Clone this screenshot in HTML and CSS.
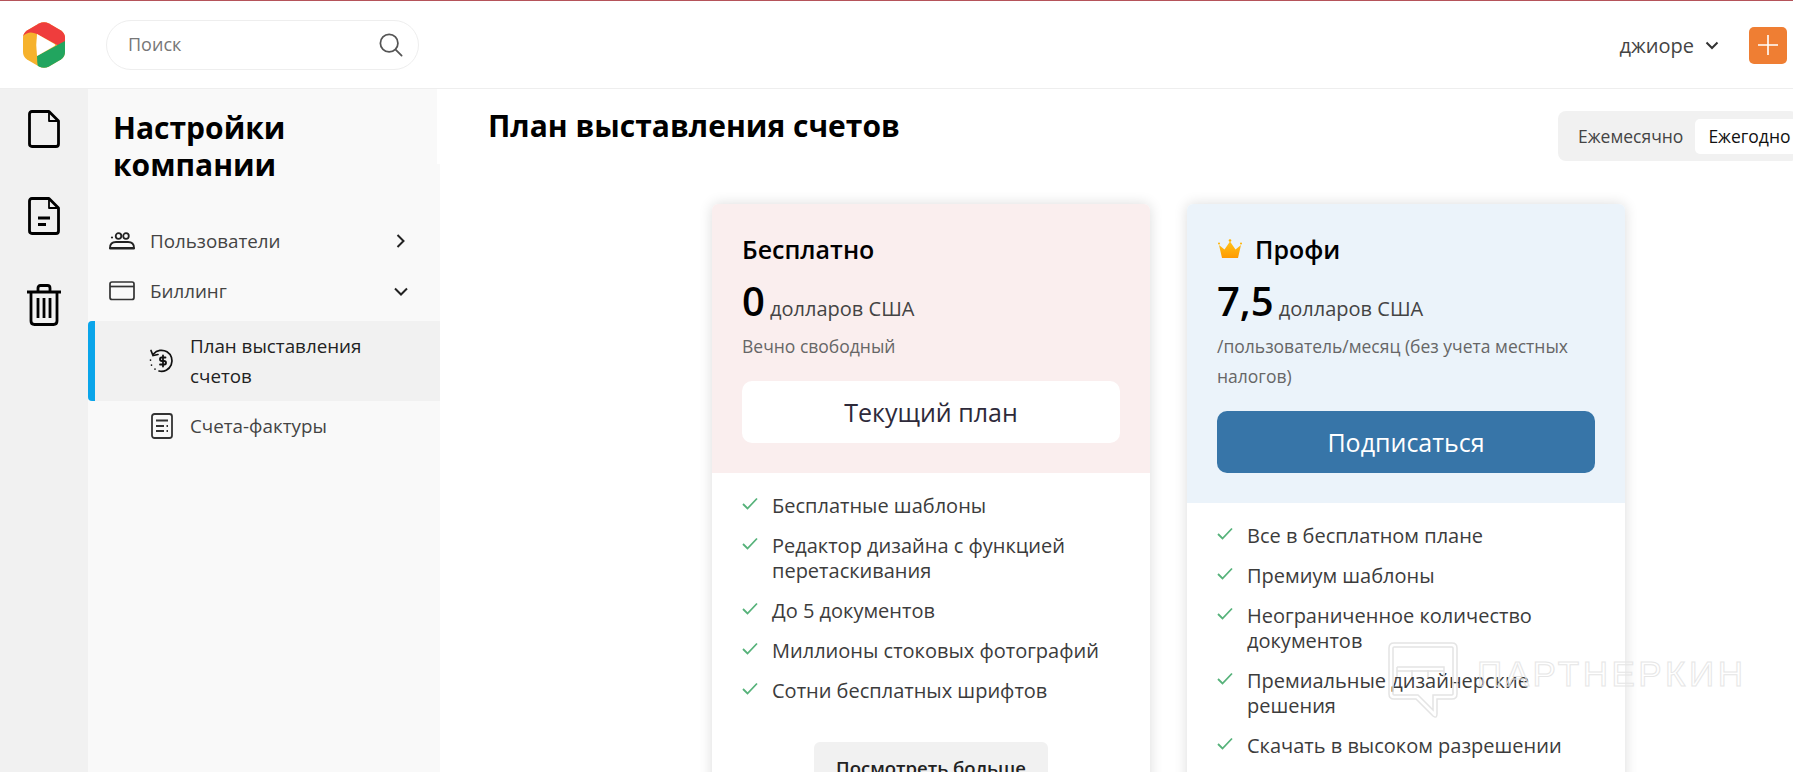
FILE: index.html
```html
<!DOCTYPE html>
<html lang="ru">
<head>
    <meta charset="UTF-8">
    <meta name="viewport" content="width=device-width, initial-scale=1.0">
    <title>План выставления счетов</title>
    <link rel="stylesheet" href="styles.css">
</head>
<body>
    <header class="topbar">
        <svg class="logo" width="42" height="46" viewBox="0 0 42 46">
            <defs>
                <clipPath id="logoHex">
                    <path d="M16 1.500 Q21 -1 26 1.500 L38 8.500 Q42 11 42 16 V30 Q42 35 38 37.500 L26 44.500 Q21 47 16 44.500 L4 37.500 Q0 35 0 30 V16 Q0 11 4 8.500 Z"/>
                </clipPath>
            </defs>
            <g clip-path="url(#logoHex)">
                <rect width="42" height="46" fill="#f6b22c"/>
                <path d="M0 14 Q6 8 14 12 L36 24 L42 20 V0 H0 Z" fill="#ef3d3d"/>
                <path d="M14 34 L42 19 V46 H15 Q14 40 14 34 Z" fill="#22a55f"/>
                <path d="M14 12 L31.500 22 Q33 23 31.500 24 L14 34 Q12.500 23 14 12 Z" fill="#fff"/>
            </g>
        </svg>
        <div class="search">
            <span class="search_text">Поиск</span>
            <svg width="24" height="24" viewBox="0 0 26 26" fill="none" stroke="#555" stroke-width="1.900" stroke-linecap="round">
                <circle cx="11" cy="11" r="9.500"/>
                <path d="M18 18 L24.500 24.500"/>
            </svg>
        </div>
        <div class="user">
            <span>джиоре</span>
            <svg width="14" height="9" viewBox="0 0 14 9" fill="none" stroke="#333" stroke-width="2"><path d="M1.500 1.500 L7 7 L12.500 1.500"/></svg>
        </div>
        <div class="add_btn">
            <svg width="20" height="20" viewBox="0 0 20 20" stroke="#fff" stroke-width="1.600"><path d="M10 0 V20 M0 10 H20"/></svg>
        </div>
    </header>

    <div class="layout">
        <nav class="rail">
            <svg width="32" height="38" viewBox="0 0 32 38" fill="none" stroke="#000" stroke-width="2.800" stroke-linejoin="round">
                <path d="M4 1.500 H21 L30.500 11 V34 Q30.500 36.500 28 36.500 H4 Q1.500 36.500 1.500 34 V4 Q1.500 1.500 4 1.500 Z"/>
                <path d="M21 1.500 V11 H30.500" stroke-width="1.800"/>
            </svg>
            <svg width="32" height="38" viewBox="0 0 32 38" fill="none" stroke="#000" stroke-width="2.800" stroke-linejoin="round">
                <path d="M4 1.500 H21 L30.500 11 V34 Q30.500 36.500 28 36.500 H4 Q1.500 36.500 1.500 34 V4 Q1.500 1.500 4 1.500 Z"/>
                <path d="M21 1.500 V11 H30.500" stroke-width="1.800"/>
                <path d="M10 21 H22 M10 27.500 H18"/>
            </svg>
            <svg width="36" height="42" viewBox="0 0 36 42" fill="none" stroke="#000" stroke-width="2.800" stroke-linejoin="round">
                <path d="M1 8 H35"/>
                <path d="M12 7 V4 Q12 1.500 14.500 1.500 H21.500 Q24 1.500 24 4 V7"/>
                <path d="M5 8 V37 Q5 40.500 8.500 40.500 H27.500 Q31 40.500 31 37 V8"/>
                <path d="M12 14 V34 M18 14 V34 M24 14 V34"/>
            </svg>
        </nav>

        <aside class="sidebar">
            <div class="side_head">
                <h2 class="side_title">Настройки компании</h2>
            </div>
            <div class="side_nav">
                <div class="menu_item">
                    <svg width="26" height="18" viewBox="0 0 26 18" fill="#222">
                        <circle cx="9.500" cy="4" r="2.800" fill="none" stroke="#222" stroke-width="1.800"/>
                        <circle cx="17" cy="4" r="2.800" fill="none" stroke="#222" stroke-width="1.800"/>
                        <circle cx="3" cy="5.500" r="1.100"/>
                        <path d="M1 16 Q1 10 7 10 H19 Q25 10 25 16 Z" fill="none" stroke="#222" stroke-width="1.800"/>
                        <path d="M0.500 15 H25.500 V17.500 H0.500 Z"/>
                    </svg>
                    <span class="menu_label">Пользователи</span>
                    <svg class="menu_arrow arrow_side" width="9" height="14" viewBox="0 0 9 14" fill="none" stroke="#222" stroke-width="2"><path d="M1.500 1 L7.500 7 L1.500 13"/></svg>
                </div>
                <div class="menu_item">
                    <svg width="26" height="20" viewBox="0 0 26 20" fill="none" stroke="#333" stroke-width="1.700">
                        <rect x="1" y="1" width="24" height="17.500" rx="2"/>
                        <path d="M1 5.500 H25"/>
                    </svg>
                    <span class="menu_label">Биллинг</span>
                    <svg class="menu_arrow" width="14" height="9" viewBox="0 0 14 9" fill="none" stroke="#222" stroke-width="2"><path d="M1 1.500 L7 7.500 L13 1.500"/></svg>
                </div>
                <div class="sub_item sub_active">
                    <svg width="26" height="26" viewBox="0 0 26 26" fill="none" stroke="#111" stroke-width="1.700" stroke-linecap="round">
                        <path d="M4.500 6 A10.500 10.500 0 1 1 10 23"/>
                        <path d="M2 2.500 L4 7.500 L9 6.500"/>
                        <path d="M1.500 12 V12.100 M2.500 17 V17.100 M6 21 V21.100"/>
                        <path d="M16.500 9.500 H12.500 Q11 9.500 11 11.300 Q11 13 13 13 H15 Q17 13 17 14.800 Q17 16.500 15.500 16.500 H11 M14 7.500 V18.500" stroke-width="1.800"/>
                    </svg>
                    <span>План выставления счетов</span>
                </div>
                <div class="sub_item sub_plain">
                    <svg width="22" height="26" viewBox="0 0 22 26" fill="none" stroke="#333" stroke-width="1.800">
                        <rect x="1" y="1" width="20" height="24" rx="2.500"/>
                        <path d="M5 7.500 H17 M5 13 H13 M15.500 13 H17 M5 18 H13 M15.500 18 H17"/>
                    </svg>
                    <span class="sub_muted">Счета-фактуры</span>
                </div>
            </div>
        </aside>

        <main class="content">
            <div class="content_head">
                <h1 class="page_title">План выставления счетов</h1>
                <div class="period">
                    <span class="period_opt">Ежемесячно</span>
                    <span class="period_opt period_on">Ежегодно</span>
                </div>
            </div>

            <div class="plans">
                <section class="plan">
                    <div class="plan_top plan_free">
                        <div class="plan_name">Бесплатно</div>
                        <div class="plan_price"><b>0</b> долларов США</div>
                        <p class="plan_note">Вечно свободный</p>
                        <div class="plan_btn btn_current">Текущий план</div>
                    </div>
                    <ul class="features">
                        <li><svg class="check" viewBox="0 0 16 13"><path d="M1 7 L5.500 11.500 L15 1.500"/></svg>Бесплатные шаблоны</li>
                        <li><svg class="check" viewBox="0 0 16 13"><path d="M1 7 L5.500 11.500 L15 1.500"/></svg>Редактор дизайна с функцией перетаскивания</li>
                        <li><svg class="check" viewBox="0 0 16 13"><path d="M1 7 L5.500 11.500 L15 1.500"/></svg>До 5 документов</li>
                        <li><svg class="check" viewBox="0 0 16 13"><path d="M1 7 L5.500 11.500 L15 1.500"/></svg>Миллионы стоковых фотографий</li>
                        <li><svg class="check" viewBox="0 0 16 13"><path d="M1 7 L5.500 11.500 L15 1.500"/></svg>Сотни бесплатных шрифтов</li>
                    </ul>
                    <div class="more_wrap"><span class="more_btn">Посмотреть больше</span></div>
                </section>

                <section class="plan">
                    <div class="plan_top plan_pro">
                        <div class="plan_name">
                            <svg class="crown" width="24" height="20" viewBox="0 0 24 20">
                                <defs>
                                    <linearGradient id="crownFill" x1="0" y1="0" x2="0" y2="1">
                                        <stop offset="0" stop-color="#ffc21a"/>
                                        <stop offset="1" stop-color="#ff9a00"/>
                                    </linearGradient>
                                </defs>
                                <path d="M1 6 L6.500 10.500 L12 2.500 L17.500 10.500 L23 6 L20 19 H4 Z" fill="url(#crownFill)"/>
                                <circle cx="12" cy="1.500" r="1.300" fill="#ffb300"/>
                                <circle cx="1" cy="4.500" r="1" fill="#ffb300"/>
                                <circle cx="23" cy="4.500" r="1" fill="#ffb300"/>
                            </svg>
                            Профи
                        </div>
                        <div class="plan_price"><b>7,5</b> долларов США</div>
                        <p class="plan_note">/пользователь/месяц (без учета местных налогов)</p>
                        <div class="plan_btn btn_subscribe">Подписаться</div>
                    </div>
                    <ul class="features">
                        <li><svg class="check" viewBox="0 0 16 13"><path d="M1 7 L5.500 11.500 L15 1.500"/></svg>Все в бесплатном плане</li>
                        <li><svg class="check" viewBox="0 0 16 13"><path d="M1 7 L5.500 11.500 L15 1.500"/></svg>Премиум шаблоны</li>
                        <li><svg class="check" viewBox="0 0 16 13"><path d="M1 7 L5.500 11.500 L15 1.500"/></svg>Неограниченное количество документов</li>
                        <li><svg class="check" viewBox="0 0 16 13"><path d="M1 7 L5.500 11.500 L15 1.500"/></svg>Премиальные дизайнерские решения</li>
                        <li><svg class="check" viewBox="0 0 16 13"><path d="M1 7 L5.500 11.500 L15 1.500"/></svg>Скачать в высоком разрешении</li>
                    </ul>
                </section>
            </div>
        </main>
    </div>

    <!-- водяной знак поверх страницы -->
    <div class="watermark">
        <svg width="70" height="77" viewBox="0 0 70 77" fill="none" stroke="#e4e4e4" stroke-width="1.500">
            <path d="M6 1 H64 Q69 1 69 6 V52 Q69 57 64 57 H49 V72 Q49 77 45 74 L28 57 H6 Q1 57 1 52 V6 Q1 1 6 1 Z"/>
            <path d="M6 5 H64 Q65 5 65 6 V52 Q65 53 64 53 H45 V68 L30 53 H6 Q5 53 5 52 V6 Q5 5 6 5 Z"/>
            <path d="M9 25 H56 V35 M9 25 V35 M24 28 V35 M40 28 V35 M9 29 H56"/>
        </svg>
        <span class="watermark_text">ПАРТНЕРКИН</span>
    </div>
</body>
</html>
```

FILE: styles.css
```css
* {
    box-sizing: border-box;
}
html, body {
    height: 100%;
}
body {
    margin: 0;
    display: flex;
    flex-direction: column;
    overflow: hidden;
    font-family: "Open Sans", "Noto Sans", sans-serif;
    color: #333;
    background: #fff;
}

/* Topbar */
.topbar {
    flex: none;
    display: flex;
    align-items: center;
    height: 89px;
    padding: 1px 6px 0 23px;
    border-top: 1px solid #b5545a;
    border-bottom: 1px solid #eee;
}
.logo {
    flex: none;
}
.search {
    display: flex;
    align-items: center;
    justify-content: space-between;
    width: 313px;
    height: 50px;
    margin-left: 41px;
    padding: 0 15px 0 21px;
    border: 1px solid #eee;
    border-radius: 25px;
}
.search_text {
    padding-bottom: 2px;
    font-size: 18px;
    color: #777;
}
.user {
    display: flex;
    align-items: center;
    gap: 11px;
    margin-left: auto;
    font-size: 20px;
    color: #444;
}
.add_btn {
    display: flex;
    align-items: center;
    justify-content: center;
    width: 38px;
    height: 37px;
    margin-left: 30px;
    border-radius: 5px;
    background: #ef7e33;
}

/* Layout */
.layout {
    flex: 1;
    display: flex;
    min-height: 0;
}
.rail {
    flex: none;
    display: flex;
    flex-direction: column;
    align-items: center;
    width: 88px;
    padding-top: 21px;
    background: #f1f1f1;
}
.rail svg:nth-child(2) {
    margin-top: 49px;
}
.rail svg:nth-child(3) {
    margin-top: 49px;
}

/* Sidebar */
.sidebar {
    flex: none;
    display: flex;
    flex-direction: column;
    width: 352px;
}
.side_head {
    flex: none;
    height: 75px;
    margin-right: 3px;
    padding: 20px 25px 0;
    background: #f9f9f9;
}
.side_title {
    position: relative;
    margin: 0;
    font-size: 30px;
    line-height: 37px;
    font-weight: 700;
    color: #000;
}
.side_nav {
    flex: 1;
    padding-top: 52px;
    background: #f9f9f9;
}
.menu_item {
    display: flex;
    align-items: center;
    height: 50px;
    padding: 0 32px 0 21px;
    gap: 15px;
    font-size: 18.800px;
    color: #444;
}
.menu_arrow {
    margin-left: auto;
}
.arrow_side {
    margin-right: 3px;
}
.sub_item {
    display: flex;
    align-items: center;
    min-height: 50px;
    font-size: 18.800px;
    line-height: 30px;
    color: #222;
}
.sub_item svg {
    flex: none;
}
.sub_active {
    width: 100%;
    margin-top: 5px;
    padding: 10px 60px 10px 54px;
    gap: 15px;
    border-left: 7px solid #0aa5ea;
    border-radius: 4px 0 0 4px;
    background: #f1f1f1;
}
.sub_plain {
    padding-left: 63px;
    gap: 17px;
}
.sub_muted {
    color: #444;
}

/* Content */
.content {
    flex: 1;
    min-width: 0;
    overflow: hidden;
    padding: 0 0 0 48px;
}
.content_head {
    display: flex;
    align-items: flex-start;
    justify-content: space-between;
    height: 115px;
}
.page_title {
    margin: 17px 0 0;
    font-size: 30px;
    line-height: 40px;
    font-weight: 700;
    color: #000;
}
.period {
    display: flex;
    align-items: center;
    gap: 12px;
    width: 240px;
    flex: none;
    height: 50px;
    margin: 22px -5px 0 0;
    padding-left: 20px;
    border-radius: 8px;
    background: #f1f1f1;
    font-size: 17.500px;
}
.period_opt {
    color: #444;
}
.period_on {
    display: flex;
    align-items: center;
    flex: 1;
    height: 35px;
    padding-left: 13px;
    border-radius: 5px;
    background: #fff;
    color: #111;
}

/* Plans */
.plans {
    display: flex;
    align-items: flex-start;
    gap: 37px;
    margin-left: 224px;
}
.plan {
    flex: none;
    width: 438px;
    min-height: 640px;
    border-radius: 6px;
    background: #fff;
    box-shadow: 0 0 14px rgba(0, 0, 0, 0.14);
}
.plan_top {
    padding: 29px 30px 30px;
    border-radius: 6px 6px 0 0;
}
.plan_free {
    background: #faeeee;
}
.plan_pro {
    background: #ebf3fa;
}
.plan_name {
    display: flex;
    align-items: center;
    gap: 13px;
    font-size: 25px;
    line-height: 32px;
    font-weight: 600;
    color: #000;
}
.crown {
    margin-left: 1px;
}
.plan_price {
    margin-top: 14px;
    font-size: 20px;
    line-height: 44px;
    color: #444;
}
.plan_price b {
    font-size: 40px;
    font-weight: 600;
    color: #000;
}
.plan_note {
    margin: 0;
    font-size: 17.500px;
    line-height: 30px;
    color: #666;
}
.plan_btn {
    display: flex;
    align-items: center;
    justify-content: center;
    height: 62px;
    margin-top: 20px;
    border-radius: 10px;
    font-size: 25px;
}
.btn_current {
    background: #fff;
    color: #2e2a3a;
}
.btn_subscribe {
    background: #3775a8;
    color: #fff;
}
.features {
    list-style: none;
    margin: 0;
    padding: 20px 30px 0;
    font-size: 20px;
    line-height: 25px;
}
.features li {
    position: relative;
    padding: 0 0 15px 30px;
    color: #3c3c3c;
}
.check {
    position: absolute;
    left: 0;
    top: 4px;
    width: 16px;
    height: 13px;
    fill: none;
    stroke: #56b27a;
    stroke-width: 1.800;
}
.more_wrap {
    display: flex;
    justify-content: center;
    margin-top: 24px;
}
.more_btn {
    display: flex;
    align-items: center;
    justify-content: center;
    width: 234px;
    height: 50px;
    border-radius: 6px;
    background: #f1f1f1;
    font-size: 18.500px;
    font-weight: 600;
    color: #222;
}

/* Watermark */
.watermark {
    position: absolute;
    left: 1388px;
    top: 642px;
    display: flex;
    align-items: center;
    gap: 19px;
    pointer-events: none;
}
.watermark_text {
    position: relative;
    top: -7px;
    font-family: "Liberation Sans", sans-serif;
    font-size: 35px;
    letter-spacing: 3.500px;
    color: transparent;
    -webkit-text-stroke: 1px #e6e6e6;
}
```
